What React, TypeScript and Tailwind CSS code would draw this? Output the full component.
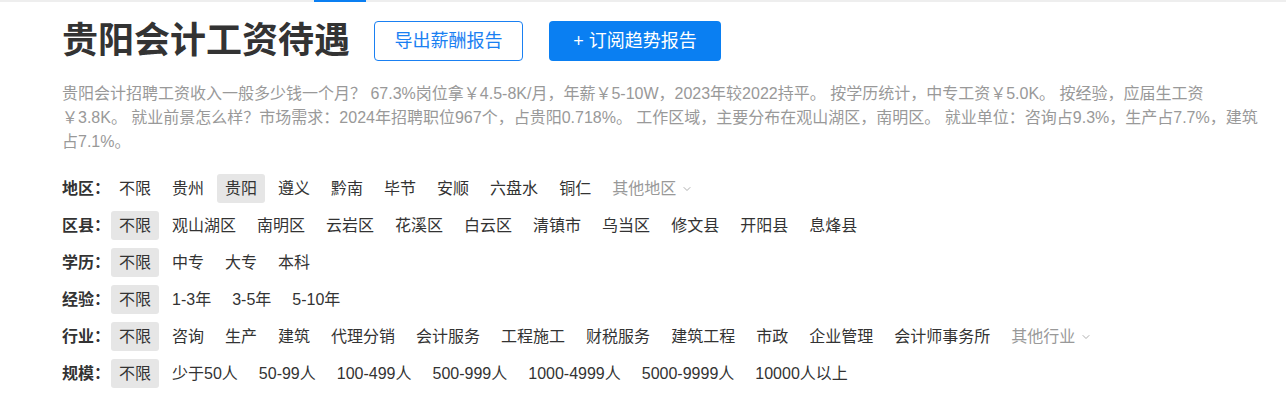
import React from 'react';
import { ChevronDown } from 'lucide-react';

type Row = {
  label: string;
  items: string[];
  active: string;
  more?: string;
};

const rows: Row[] = [
  {
    label: '地区',
    items: ['不限', '贵州', '贵阳', '遵义', '黔南', '毕节', '安顺', '六盘水', '铜仁'],
    active: '贵阳',
    more: '其他地区',
  },
  {
    label: '区县',
    items: ['不限', '观山湖区', '南明区', '云岩区', '花溪区', '白云区', '清镇市', '乌当区', '修文县', '开阳县', '息烽县'],
    active: '不限',
  },
  { label: '学历', items: ['不限', '中专', '大专', '本科'], active: '不限' },
  { label: '经验', items: ['不限', '1-3年', '3-5年', '5-10年'], active: '不限' },
  {
    label: '行业',
    items: ['不限', '咨询', '生产', '建筑', '代理分销', '会计服务', '工程施工', '财税服务', '建筑工程', '市政', '企业管理', '会计师事务所'],
    active: '不限',
    more: '其他行业',
  },
  {
    label: '规模',
    items: ['不限', '少于50人', '50-99人', '100-499人', '500-999人', '1000-4999人', '5000-9999人', '10000人以上'],
    active: '不限',
  },
];

function FilterRow({ row }: { row: Row }) {
  return (
    <div className="flex h-[29px] items-center">
      <span className="w-[49px] shrink-0 text-[16px] font-bold text-[#333]">{row.label}：</span>
      <div className="flex items-center gap-[5px]">
        {row.items.map((item) => (
          <span
            key={item}
            className={
              item === row.active
                ? 'flex h-[29px] items-center rounded-[3px] bg-[#e6e6e6] px-2 text-[16px] text-[#333]'
                : 'flex h-[29px] items-center rounded-[3px] px-2 text-[16px] text-[#333]'
            }
          >
            {item}
          </span>
        ))}
        {row.more && (
          <span className="flex h-[29px] items-center gap-[5px] px-2 text-[16px] text-[#999]">
            {row.more}
            <ChevronDown size={12} strokeWidth={1.6} className="text-[#999]" />
          </span>
        )}
      </div>
    </div>
  );
}

export default function App() {
  return (
    <div className="h-[404px] w-full bg-white font-['Liberation_Sans','Noto_Sans_CJK_SC',sans-serif]">
      {/* top strip */}
      <div className="h-[2px] w-full bg-[#eeeeee]">
        <div className="ml-[314px] h-[2px] w-[52px] bg-[#0a7ff2]" />
      </div>

      <div className="pl-[62px]">
        <div className="mt-[19px] flex h-[40px] items-center">
          <h1 className="text-[36px] font-bold leading-none text-[#333]">贵阳会计工资待遇</h1>
          <button className="ml-[24px] h-[40px] w-[149px] rounded-[4px] border border-[#1a80f2] bg-white text-[18px] text-[#1a80f2]">
            导出薪酬报告
          </button>
          <button className="ml-[26px] h-[40px] w-[172px] rounded-[4px] bg-[#0a7ff2] text-[18px] text-white">
            + 订阅趋势报告
          </button>
        </div>

        <p className="mt-[21px] whitespace-nowrap text-[16px] leading-[24px] text-[#999]">
          贵阳会计招聘工资收入一般多少钱一个月？ 67.3%岗位拿￥4.5-8K/月，年薪￥5-10W，2023年较2022持平。 按学历统计，中专工资￥5.0K。 按经验，应届生工资
          <br />
          ￥3.8K。 就业前景怎么样？市场需求：2024年招聘职位967个，占贵阳0.718%。 工作区域，主要分布在观山湖区，南明区。 就业单位：咨询占9.3%，生产占7.7%，建筑
          <br />
          占7.1%。
        </p>

        <div className="mt-[20px] flex flex-col gap-2">
          {rows.map((row) => (
            <FilterRow key={row.label} row={row} />
          ))}
        </div>
      </div>
    </div>
  );
}
